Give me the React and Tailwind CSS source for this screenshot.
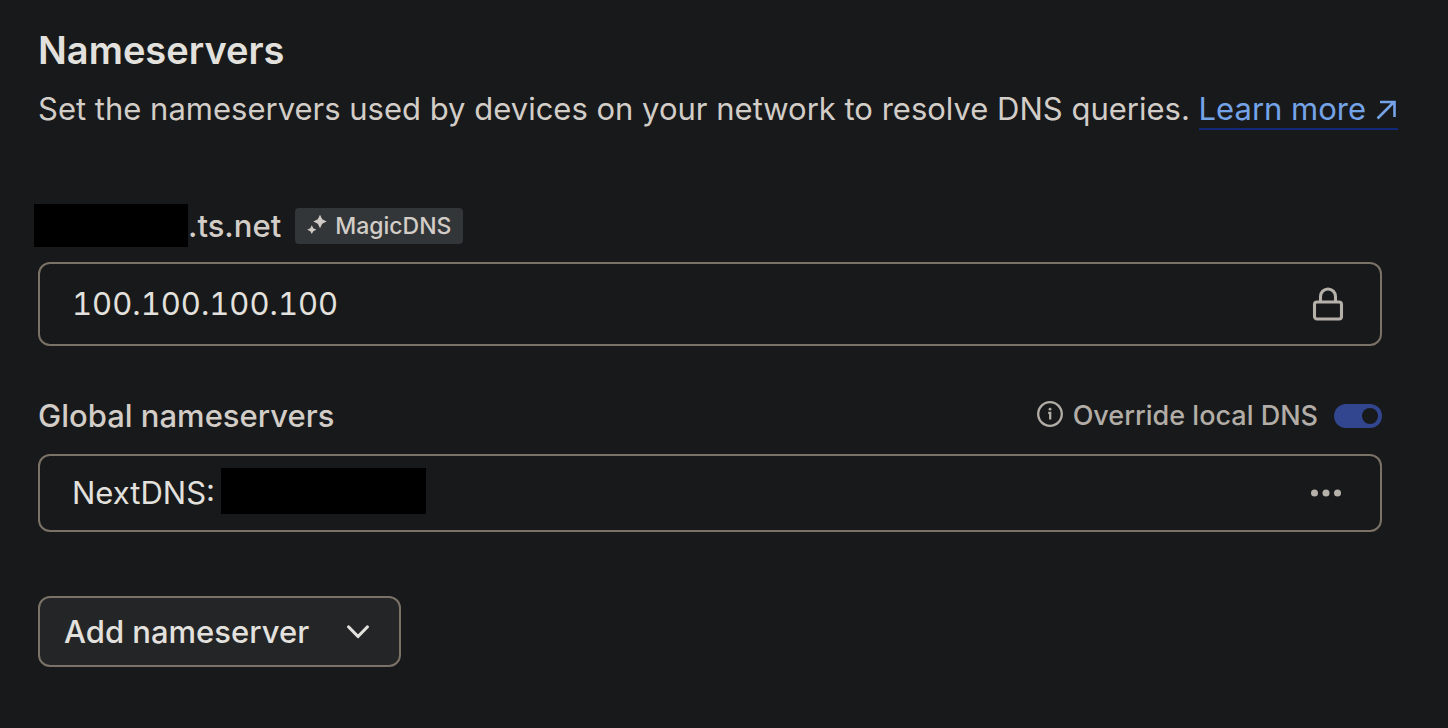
import React from 'react';

const LockIcon = () => (
    <svg width="32" height="34" viewBox="0 0 32 34" fill="none" stroke="#b5b0a9" strokeWidth="3.1" strokeLinejoin="round" aria-hidden="true">
        <rect x="2.5" y="15" width="27" height="17" rx="2.5" />
        <path d="M8.5 15V9.5a7.5 7.5 0 0 1 15 0V15" />
    </svg>
);

const SparkleIcon = () => (
    <svg className="mb-1" width="20" height="20" viewBox="0 0 20 20" fill="#cfcac4" aria-hidden="true">
        <path d="M13 0.8L15.2 5.3L19.7 7.5L15.2 9.7L13 14.2L10.8 9.7L6.3 7.5L10.8 5.3Z" />
        <path d="M4.8 11.2L6.3 14.3L9.4 15.8L6.3 17.3L4.8 20L3.3 17.3L0.2 15.8L3.3 14.3Z" />
    </svg>
);

const InfoIcon = () => (
    <svg className="mb-1" width="26" height="26" viewBox="0 0 26 26" fill="none" stroke="#b2ada6" strokeWidth="2.3" aria-hidden="true">
        <circle cx="13" cy="13" r="11.8" />
        <path d="M11.2 11.8h2V18.6" />
        <circle cx="13" cy="8.2" r="1.4" fill="#b2ada6" stroke="none" />
    </svg>
);

const App = () => {
    return (
        <div className="min-h-screen w-full bg-[#18191b] px-[38px] pt-[26px] pb-12 font-['Inter',sans-serif] text-[31px] leading-10 text-[#d2cdc7]">
            <header>
                <h1 className="text-[38px] leading-[48px] font-semibold text-[#e3e1dd]">Nameservers</h1>
                <p className="mt-[15px] whitespace-nowrap">
                    Set the nameservers used by devices on your network to resolve DNS queries.{' '}
                    <a href="#learn-more" className="inline-flex items-center border-b-2 border-[#12297a] leading-[38px] text-[#75a3e8]">
                        Learn more
                        <svg className="mt-0.5 ml-2.5" width="22" height="20" viewBox="0 0 22 20" fill="none" stroke="currentColor" strokeWidth="2.6" aria-hidden="true">
                            <path d="M1.5 18.5L18 2M4 2h14.5v15" />
                        </svg>
                    </a>
                </p>
            </header>

            <div className="mt-[74px] pr-7">
                {/* Tailnet resolver */}
                <section>
                    <div className="flex items-center">
                        <span className="-ml-1 h-[43px] w-[154px] bg-black" />
                        <label htmlFor="magic-dns" className="font-medium">.ts.net</label>
                        <span className="ml-3.5 flex h-9 items-center gap-2 rounded bg-[#323639] px-3 text-[23px] font-medium">
                            <SparkleIcon />
                            MagicDNS
                        </span>
                    </div>
                    <div className="mt-[15px] flex h-[84px] items-center rounded-xl border-2 border-[#7a7267] pr-9 pl-8">
                        <input
                            id="magic-dns"
                            type="text"
                            readOnly
                            value="100.100.100.100"
                            className="min-w-0 flex-1 bg-transparent tabular-nums text-[#e3e1dd] outline-none"
                        />
                        <LockIcon />
                    </div>
                </section>

                {/* Global nameservers */}
                <section className="mt-[50px]">
                    <div className="flex items-center justify-between">
                        <h2 className="font-medium">Global nameservers</h2>
                        <div className="flex items-center text-[27px] font-medium text-[#b2ada6]">
                            <InfoIcon />
                            <label htmlFor="override-dns" className="ml-2.5">Override local DNS</label>
                            <input
                                id="override-dns"
                                type="checkbox"
                                role="switch"
                                defaultChecked
                                className="ml-4 h-6 w-12 appearance-none rounded-full bg-[#45484c] p-1 before:block before:size-4 before:rounded-full before:bg-[#18191b] checked:bg-[#31468f] checked:before:ml-6"
                            />
                        </div>
                    </div>
                    <div className="mt-[18px] flex h-[78px] items-center justify-between rounded-xl border-2 border-[#7a7267] pr-9 pl-8 text-[#e3e1dd]">
                        <div className="flex items-center gap-1.5">
                            <span>NextDNS:</span>
                            <span className="mb-1 h-[46px] w-[205px] bg-black" />
                        </div>
                        <button type="button" aria-label="Nameserver options">
                            <svg width="34" height="8" viewBox="0 0 34 8" fill="#b5b0a9" aria-hidden="true">
                                <circle cx="4.5" cy="4" r="3.5" />
                                <circle cx="16" cy="4" r="3.5" />
                                <circle cx="27.5" cy="4" r="3.5" />
                            </svg>
                        </button>
                    </div>
                </section>

                <button
                    type="button"
                    className="mt-16 flex h-[71px] items-center gap-[38px] rounded-xl border-2 border-[#7a7267] bg-[#242527] pr-[30px] pl-6 font-medium text-[#e3e1dd]"
                >
                    Add nameserver
                    <svg width="22" height="14" viewBox="0 0 22 14" fill="none" stroke="currentColor" strokeWidth="3.2" strokeLinecap="round" strokeLinejoin="round" aria-hidden="true">
                        <path d="M1.7 2L11 11.5L20.3 2" />
                    </svg>
                </button>
            </div>
        </div>
    );
};

export default App;
